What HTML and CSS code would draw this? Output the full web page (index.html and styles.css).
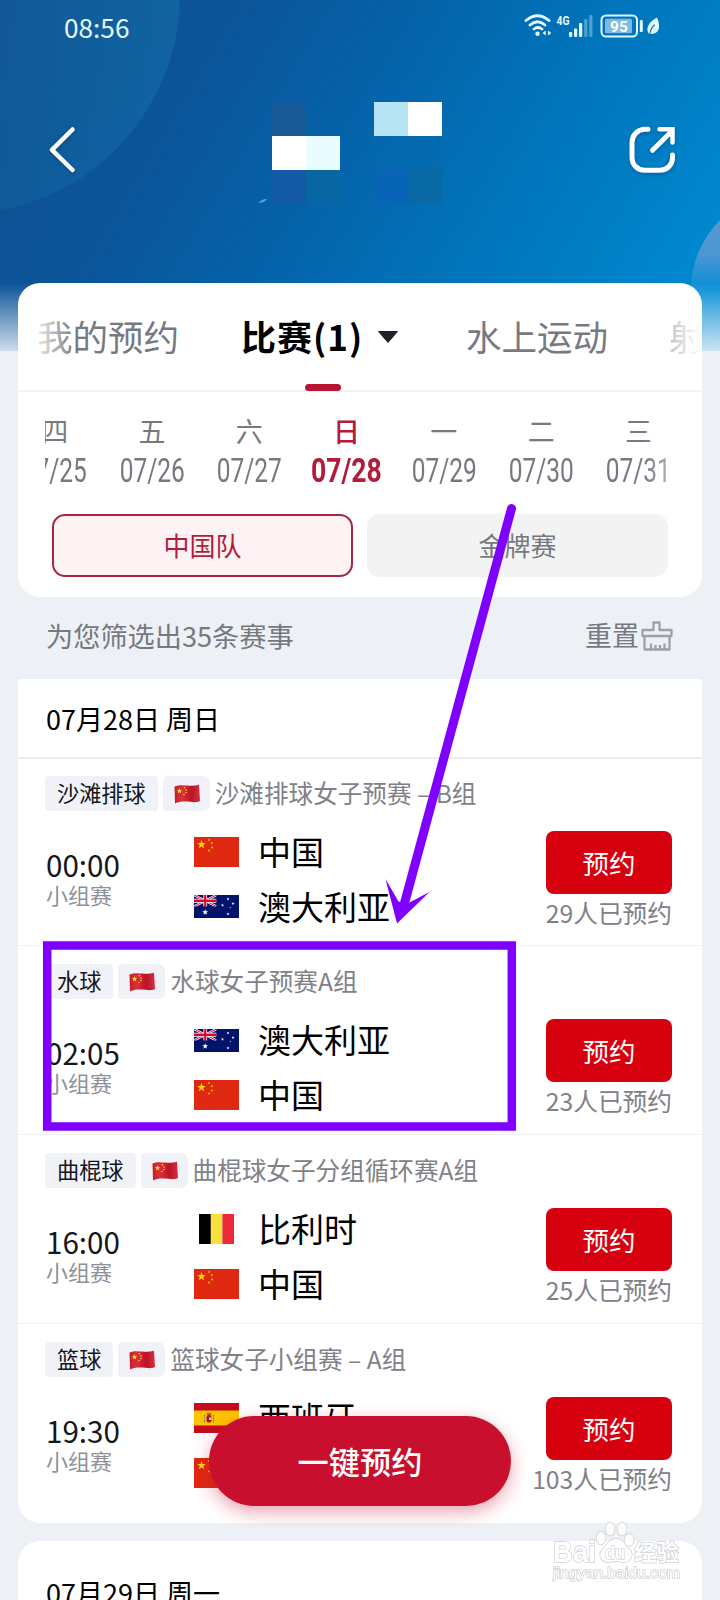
FILE: index.html
```html
<!DOCTYPE html>
<html lang="zh-CN">
<head>
<meta charset="utf-8">
<title>赛事预约</title>
<link rel="stylesheet" href="styles.css">
</head>
<body>
<svg class="defs" width="0" height="0">
  <defs>
    <path id="star" d="M0-10 2.35-3.2 9.5-3.1 3.8 1.2 5.9 8.1 0 4-5.9 8.1-3.8 1.2-9.5-3.1-2.35-3.2Z"/>
    <linearGradient id="wave" x1="0" x2="1"><stop offset="0" stop-color="#c3202f"/><stop offset=".3" stop-color="#dc2e3b"/><stop offset=".65" stop-color="#b91527"/><stop offset="1" stop-color="#d63040"/></linearGradient>
    <symbol id="cn" viewBox="0 0 45 30">
      <rect width="45" height="30" fill="#de2910"/>
      <g fill="#ffde00"><use href="#star" transform="translate(7.5 7.5) scale(.45)"/><use href="#star" transform="translate(15 3) rotate(20) scale(.15)"/><use href="#star" transform="translate(18 6) rotate(45) scale(.15)"/><use href="#star" transform="translate(18 10.5) scale(.15)"/><use href="#star" transform="translate(15 13.5) rotate(20) scale(.15)"/></g>
    </symbol>
    <symbol id="wavecn" viewBox="0 0 26 20">
      <path d="M.5 2.500C5 .5 9 1.200 13 1.500S21 2 25 .8L26 17c-4 2-8 .8-13 .6S5 17.500 1 19.500Z" fill="url(#wave)"/>
      <g fill="#ffd83c"><use href="#star" transform="translate(5.500 7) scale(.3)"/><circle cx="10.500" cy="3.800" r=".8"/><circle cx="12" cy="6" r=".8"/><circle cx="12" cy="8.500" r=".8"/><circle cx="10" cy="10.500" r=".8"/></g>
    </symbol>
    <symbol id="au" viewBox="0 0 45 23">
      <rect width="45" height="23" fill="#00146b"/>
      <svg width="22.500" height="11.500" viewBox="0 0 60 30" preserveAspectRatio="none">
        <path d="M0 0 60 30M60 0 0 30" stroke="#fff" stroke-width="6"/><path d="M0 0 60 30M60 0 0 30" stroke="#e4002b" stroke-width="2.500"/>
        <path d="M30 0v30M0 15h60" stroke="#fff" stroke-width="10"/><path d="M30 0v30M0 15h60" stroke="#e4002b" stroke-width="6"/>
      </svg>
      <g fill="#fff"><use href="#star" transform="translate(11.200 17.200) scale(.32)"/><use href="#star" transform="translate(34 4) scale(.16)"/><use href="#star" transform="translate(28.500 10.300) scale(.16)"/><use href="#star" transform="translate(39 8.500) scale(.16)"/><use href="#star" transform="translate(34 19) scale(.16)"/><circle cx="36.300" cy="12.500" r=".6"/></g>
    </symbol>
    <symbol id="es" viewBox="0 0 45 30">
      <rect width="45" height="30" fill="#c60b1e"/><rect y="7.500" width="45" height="15" fill="#ffc400"/>
      <rect x="12.500" y="12" width="5" height="7.500" rx="2" fill="#ad1519"/><rect x="15" y="14.500" width="2.500" height="2.500" fill="#d9d2d2"/>
      <path d="M12.500 10.500q2.500-1.500 5 0v1.500h-5Z" fill="#b5651d"/><path d="M10.500 12v8M19.500 12v8" stroke="#8e6b4a" stroke-width="1.200" stroke-dasharray="1.500 1"/>
    </symbol>
    <symbol id="be" viewBox="0 0 35 30"><rect width="12" height="30"/><rect x="11.700" width="11.700" height="30" fill="#f8e03c"/><rect x="23.400" width="11.600" height="30" fill="#ed2939"/></symbol>
  </defs>
</svg>

<div class="screen">
  <header class="hero">
    <svg class="hero-art" viewBox="0 0 720 350">
      <defs><linearGradient id="bubble" x1="0" y1="0" x2="0" y2="1"><stop offset="0" stop-color="#5f9ad4"/><stop offset=".32" stop-color="#4b96d3"/><stop offset=".5" stop-color="#058fd6"/><stop offset="1" stop-color="#0a93dc"/></linearGradient>
      <linearGradient id="disc" x1="0" y1="0" x2="1" y2="0"><stop offset=".2" stop-color="#1678ad" stop-opacity="0"/><stop offset="1" stop-color="#1678ad" stop-opacity=".42"/></linearGradient></defs>
      <circle cx="-40" cy="-6" r="220" fill="url(#disc)"/>
      <circle cx="790" cy="290" r="99" fill="url(#bubble)"/>
      <rect x="272" y="103" width="34" height="33" fill="#195a96"/>
      <rect x="272" y="170" width="34" height="34" fill="#125ba4"/>
      <rect x="306" y="170" width="34" height="34" fill="#0866a2"/>
      <rect x="374" y="170" width="34" height="34" fill="#0864b4"/>
      <rect x="408" y="170" width="34" height="34" fill="#0969a5"/>
      <rect x="374" y="136" width="68" height="34" fill="#0569b0" opacity=".5"/>
      <rect x="272" y="136" width="34" height="34" fill="#fff"/><rect x="306" y="136" width="34" height="34" fill="#e9fcff"/>
      <rect x="374" y="102" width="34" height="34" fill="#b8e5f6"/><rect x="408" y="102" width="34" height="34" fill="#fff"/>
      <path d="M258.500 203q3-4 8.500-4-2 3-8.500 4" fill="#5fa8d4"/>
    </svg>
    <div class="hero-fade"></div>
    <div class="status">
      <span class="clock">08:56</span>
      <svg width="138" height="26" viewBox="0 0 138 26" fill="none" stroke="#e3f8ff" stroke-linecap="round">
        <path d="M2 8.500Q13.500-1 25 8.500M6 13q7.500-6.500 15 0M10 17q4-3 8 0" stroke-width="2.800"/><circle cx="13.500" cy="21.800" r="2.200" fill="#e3f8ff" stroke="none"/>
        <path d="M21.700 18.500v5l-3.200-2.500ZM24 18.500v5l3.200-2.500Z" fill="#e3f8ff" stroke="none"/>
        <g stroke="none" fill="#e3f8ff"><rect x="45" y="20" width="3.200" height="5" rx="1"/><rect x="50" y="16.500" width="3.200" height="8.500" rx="1"/><rect x="55" y="11" width="3.200" height="14" rx="1"/><g opacity=".35"><rect x="60.200" y="7" width="3.200" height="18" rx="1"/><rect x="65.200" y="3" width="3.200" height="22" rx="1"/></g></g>
        <text x="32.500" y="12.500" class="net" textLength="13" lengthAdjust="spacingAndGlyphs">4G</text>
        <rect x="77.500" y="3.500" width="35.500" height="21" rx="4.500" stroke-width="2"/><rect x="81" y="6.800" width="27" height="14.500" rx="1.500" fill="#7fb8e3" stroke="none"/>
        <rect x="115.800" y="8" width="3" height="12" rx="1" fill="#e3f8ff" stroke="none"/>
        <text x="86" y="19.800" class="batt">95</text>
        <path d="M133 5.500c-9.500 5-11.500 12-8 16.500 8.500 1 13-5 8-16.500Z" fill="#e3f8ff" stroke="none"/><path d="M125.500 24q1-8 4.800-11" stroke="#0873b6" stroke-width="1.200"/>
      </svg>
    </div>
    <div class="navbar">
      <svg width="30" height="50" viewBox="0 0 30 50"><path d="M25.500 4.500 5 24.800 25.500 45" fill="none" stroke="#fff" stroke-width="4.500" stroke-linecap="round" stroke-linejoin="round"/></svg>
      <svg width="50" height="50" viewBox="0 0 50 50" fill="none" stroke="#fff" stroke-width="5" stroke-linecap="round" stroke-linejoin="round"><path d="M20 4.300h-3A13 13 0 0 0 4 17.300v15.500a12.500 12.500 0 0 0 12.500 12.500h15.500a12.500 12.500 0 0 0 12.500-12.500V30M24.500 25.300 43 7"/><path d="M31.500 4.300h13V17.500" stroke-width="4.500" stroke-linejoin="miter"/></svg>
    </div>
  </header>

  <section class="card filters">
    <nav class="tabs">
      <span class="tab">我的预约</span>
      <span class="tab active">比赛(1)<svg width="24" height="14" viewBox="0 0 24 14"><path d="M2.500 1.500h19L12 12.500Z" fill="#20222b" stroke="#20222b" stroke-linejoin="round"/></svg></span>
      <span class="tab third">水上运动</span>
      <span class="tab fourth">射</span>
    </nav>
    <div class="days">
      <div class="day"><span>四</span><b>07/25</b></div>
      <div class="day"><span>五</span><b>07/26</b></div>
      <div class="day"><span>六</span><b>07/27</b></div>
      <div class="day on"><span>日</span><b>07/28</b></div>
      <div class="day"><span>一</span><b>07/29</b></div>
      <div class="day"><span>二</span><b>07/30</b></div>
      <div class="day"><span>三</span><b>07/31</b></div>
    </div>
    <div class="chips"><span class="chip chosen">中国队</span><span class="chip">金牌赛</span></div>
  </section>

  <div class="summary">
    <span>为您筛选出35条赛事</span>
    <span class="reset">重置<svg width="34" height="32" viewBox="0 0 34 32" fill="none" stroke="#9da0aa" stroke-width="2.300" stroke-linejoin="round"><path d="M13.500 2.500h6v7.500h12v6H2.500v-6h11ZM4.500 16v13.500h25V16M11 29v-5.500M15.500 29v-4M20 29v-4M24.500 29v-5.500"/></svg></span>
  </div>

  <section class="card events">
    <h2>07月28日 周日</h2>
    <article class="event first">
      <div class="tags"><span class="tag">沙滩排球</span><span class="tag flag"><svg width="26" height="20"><use href="#wavecn"/></svg></span><span class="title">沙滩排球女子预赛 – B组</span></div>
      <div class="match"><div class="when"><span class="time">00:00</span><span class="stage">小组赛</span></div>
        <div class="teams"><div class="team"><svg width="45" height="30"><use href="#cn"/></svg><span>中国</span></div><div class="team"><svg width="45" height="23"><use href="#au"/></svg><span>澳大利亚</span></div></div>
        <div class="action"><button>预约</button><span>29人已预约</span></div></div>
    </article>
    <article class="event">
      <div class="tags"><span class="tag">水球</span><span class="tag flag"><svg width="26" height="20"><use href="#wavecn"/></svg></span><span class="title">水球女子预赛A组</span></div>
      <div class="match"><div class="when"><span class="time">02:05</span><span class="stage">小组赛</span></div>
        <div class="teams"><div class="team"><svg width="45" height="23"><use href="#au"/></svg><span>澳大利亚</span></div><div class="team"><svg width="45" height="30"><use href="#cn"/></svg><span>中国</span></div></div>
        <div class="action"><button>预约</button><span>23人已预约</span></div></div>
    </article>
    <article class="event">
      <div class="tags"><span class="tag">曲棍球</span><span class="tag flag"><svg width="26" height="20"><use href="#wavecn"/></svg></span><span class="title">曲棍球女子分组循环赛A组</span></div>
      <div class="match"><div class="when"><span class="time">16:00</span><span class="stage">小组赛</span></div>
        <div class="teams"><div class="team"><svg width="45" height="30"><use href="#be"/></svg><span>比利时</span></div><div class="team"><svg width="45" height="30"><use href="#cn"/></svg><span>中国</span></div></div>
        <div class="action"><button>预约</button><span>25人已预约</span></div></div>
    </article>
    <article class="event last">
      <div class="tags"><span class="tag">篮球</span><span class="tag flag"><svg width="26" height="20"><use href="#wavecn"/></svg></span><span class="title">篮球女子小组赛 – A组</span></div>
      <div class="match"><div class="when"><span class="time">19:30</span><span class="stage">小组赛</span></div>
        <div class="teams"><div class="team"><svg width="45" height="30"><use href="#es"/></svg><span>西班牙</span></div><div class="team"><svg width="45" height="30"><use href="#cn"/></svg><span>中国</span></div></div>
        <div class="action"><button>预约</button><span>103人已预约</span></div></div>
    </article>
  </section>

  <section class="card next"><h2>07月29日 周一</h2></section>

  <button class="book-all">一键预约</button>

  <svg class="marks" width="720" height="1600" viewBox="0 0 720 1600">
    <rect x="47.200" y="945.500" width="464.600" height="181" fill="none" stroke="#8000ff" stroke-width="8.500"/>
    <path d="M511.500 508.500 404 905" stroke="#8000ff" stroke-width="9" stroke-linecap="round"/>
    <path d="M397 923.500 385.500 879 398.500 901.500 407.500 903.500 429.500 892Z" fill="#8000ff"/>
    <g class="watermark">
      <text x="553" y="1562" class="brand" textLength="43" lengthAdjust="spacingAndGlyphs">Bai</text>
      <path d="M616 1539c8 0 9 7 14 11 4 4 1 12-6 12-4 0-5-1-8-1s-4 1-8 1c-7 0-10-7-6-12 5-4 6-11 14-11Z"/>
      <ellipse cx="601" cy="1538" rx="4.500" ry="6.500"/><ellipse cx="610" cy="1529" rx="4.500" ry="6.500"/><ellipse cx="622" cy="1529" rx="4.500" ry="6.500"/><ellipse cx="629" cy="1540" rx="4.500" ry="6"/>
      <text x="605" y="1559" class="du" textLength="20" lengthAdjust="spacingAndGlyphs">du</text>
      <text x="634" y="1560" class="exp" textLength="45" lengthAdjust="spacingAndGlyphs">经验</text>
      <text x="553" y="1578" class="url" textLength="127" lengthAdjust="spacingAndGlyphs">jingyan.baidu.com</text>
    </g>
  </svg>
</div>
</body>
</html>
```
FILE: styles.css
```css
* { box-sizing: border-box; }
body { margin: 0; font-family: "Noto Sans CJK SC", sans-serif; color: #000; }
svg { display: block; flex: none; }
button { border: 0; font: inherit; padding: 0; }
.defs { position: absolute; }
.screen { position: relative; width: 720px; height: 1600px; overflow: hidden; background: #edf1f6; }

.hero { position: relative; height: 351px; margin-bottom: -68px; background: linear-gradient(121deg, #114f90 0%, #0b559a 27%, #0562a8 45%, #0077bd 70%, #0088cf 92%); }
.hero-art, .hero-fade { position: absolute; inset: 0; }
.hero-fade { background: linear-gradient(rgba(237, 241, 247, 0) 283px, rgba(237, 241, 247, .85) 350px); }
.status { position: relative; display: flex; justify-content: space-between; padding: 12px 58px 0 64px; height: 54px; color: #e3f8ff; }
.clock { font-size: 26.2px; line-height: 30px; }
.net { font: bold 12.5px Roboto, sans-serif; fill: #e3f8ff; stroke: none; }
.batt { font: bold 15.5px Roboto, sans-serif; fill: #fff; stroke: none; }
.navbar { position: relative; display: flex; justify-content: space-between; padding: 71px 42px 0 47px; filter: drop-shadow(0 1px 2px rgba(0, 40, 90, .4)); }

.card { position: relative; width: 684px; margin: 0 18px; background: #fff; border-radius: 22px; }
.filters { height: 314px; }
.tabs { display: flex; align-items: center; height: 109px; padding: 0 0 2px 19px; border-bottom: 2px solid #f4f4f6; border-radius: 22px 22px 0 0; overflow: hidden; font-size: 35.5px; line-height: 52px; color: #777981; position: relative; white-space: nowrap; }
.tabs::before, .tabs::after { content: ""; position: absolute; z-index: 1; top: 28px; height: 60px; }
.tabs::before { left: 12px; width: 45px; background: linear-gradient(90deg, #fff, rgba(255, 255, 255, 0)); }
.tabs::after { right: 0; width: 50px; background: linear-gradient(270deg, #fff 2px, rgba(255, 255, 255, .3)); }
.tab { width: 204px; flex: none; }
.tab.active { display: flex; align-items: center; gap: 13px; width: 225px; color: #000; font-weight: 700; font-size: 35px; letter-spacing: 1px; }
.tab.active svg { margin-top: 2px; }
.filters::after { content: ""; position: absolute; left: 287px; top: 101px; width: 36px; height: 7px; border-radius: 4px; background: #ba1433; }
.fourth { width: 36px; }
.third { width: 203px; }
.days { display: flex; height: 122px; margin-left: 27px; width: 623px; overflow: hidden; padding-top: 20px; color: #777981; position: relative; }
.days::after { content: ""; position: absolute; right: 0; top: 0; width: 24px; height: 110px; background: linear-gradient(270deg, rgba(255, 255, 255, .4), rgba(255, 255, 255, 0)); }
.day { flex: none; width: 97.3px; display: flex; flex-direction: column; align-items: center; font-size: 27px; line-height: 38px; }
.day:first-child { margin-left: -39px; }
.day b { font: 400 34px/41px Roboto, sans-serif; transform: scaleX(.72); }
.on { color: #b41b3b; }
.on span { font-weight: 500; }
.day.on b { font-weight: 700; transform: scaleX(.78); }
.chips { display: flex; gap: 14px; padding: 0 34px; }
.chip { width: 301px; height: 63px; border-radius: 13px; background: #f3f3f4; font-size: 26px; line-height: 61px; text-align: center; color: #777981; }
.chosen { border: 2px solid #a72742; background: #fdf3f4; color: #b41b3b; line-height: 57px; }

.summary { display: flex; justify-content: space-between; align-items: center; height: 82px; padding: 0 46px 7px 46px; font-size: 27.2px; line-height: 36px; color: #777981; }
.reset { display: flex; align-items: center; gap: 1px; font-size: 27px; }
.reset svg { margin-top: 3px; }

.events { height: 844px; border-radius: 3px 3px 22px 22px; }
h2 { margin: 0; height: 80px; padding-left: 28px; border-bottom: 2px solid #ededf0; font-size: 27px; line-height: 79px; font-weight: 400; }
.event { height: 189px; padding: 18px 30px 0 27px; border-bottom: 1px solid #f1f1f4; }
.first { height: 187px; padding-top: 17px; }
.last { border: 0; }
.tags { display: flex; gap: 5px; height: 35px; }
.tag { padding: 0 12px; border-radius: 4px; background: #f0f2f7; font-size: 22.2px; line-height: 33px; color: #15161c; }
.flag { display: flex; align-items: center; padding: 0 10px 0 11px; border-radius: 4px 7px 7px 4px; }
.title { font-size: 24.6px; line-height: 33px; color: #808188; white-space: nowrap; }
.match { display: flex; padding-top: 14px; }
.when { display: flex; flex-direction: column; width: 149px; padding: 22px 0 0 1px; }
.time { font-size: 29.6px; line-height: 35px; color: #16171b; }
.stage { font-size: 22px; line-height: 24px; color: #909198; }
.teams { flex: 1; }
.team { display: flex; align-items: center; gap: 19px; height: 54px; font-size: 33px; line-height: 52px; }
.team span { margin-top: -2px; }
.team + .team { height: 55px; }
.action { display: flex; flex-direction: column; align-items: flex-end; padding-top: 6px; }
.action button { width: 126px; height: 63px; border-radius: 8px; background: #d7000f; color: #fff; font-size: 26.5px; line-height: 59px; }
.action span { font-size: 24.7px; line-height: 37px; color: #808188; }
.next { margin-top: 18px; height: 120px; }
.next h2 { padding-top: 12px; height: 100px; border: 0; }
.book-all { position: absolute; left: 209px; top: 1415.5px; width: 302px; height: 90px; border-radius: 45px; background: #c8102e; color: #fff; font-size: 31.2px; font-weight: 500; line-height: 86px; box-shadow: 0 6px 18px rgba(200, 16, 46, .38); }

.marks { position: absolute; left: 0; top: 0; }
.watermark { fill: #fff; stroke: #c6c8cd; stroke-width: 1.400; opacity: .85; paint-order: stroke; }
.brand { font: bold 29px "Liberation Sans", sans-serif; }
.du { font: bold 19px "Liberation Sans", sans-serif; }
.exp { font: bold 22px "Noto Sans CJK SC", sans-serif; }
.url { font: 15px "Liberation Sans", sans-serif; }
```
